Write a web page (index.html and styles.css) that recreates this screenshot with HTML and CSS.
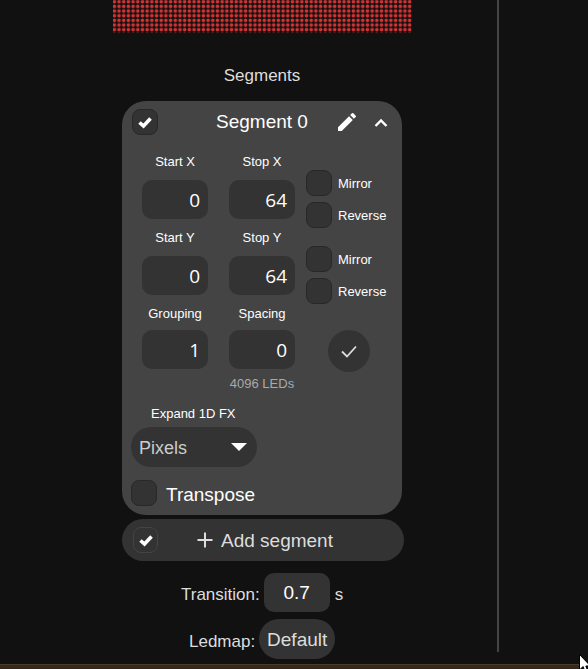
FILE: index.html
```html
<!DOCTYPE html>
<html lang="en">
<head>
<meta charset="utf-8">
<title>Segments</title>
<link rel="stylesheet" href="styles.css">
</head>
<body>
<div class="page">
  <main class="pane">
    <div class="matrix"></div>
    <h2 class="heading">Segments</h2>
    <section class="panel">
      <header class="panel-head">
        <span class="box"><svg class="tick" viewBox="0 0 16 16"><path d="M2.5 8.5 6.5 12 13.5 4.5" /></svg></span>
        <span class="panel-title">Segment 0</span>
        <svg class="pencil" viewBox="0 0 24 24"><path d="M3 17.25V21h3.75L17.81 9.94l-3.75-3.75L3 17.25zM20.71 7.04a1 1 0 0 0 0-1.41l-2.34-2.34a1 1 0 0 0-1.41 0l-1.83 1.83 3.75 3.75 1.83-1.83z"/></svg>
        <svg class="chevron" viewBox="0 0 14 10"><path d="M1.5 8 7 2.5 12.5 8"/></svg>
      </header>
      <div class="range">
        <label class="field"><span class="cap">Start X</span><span class="num">0</span></label>
        <label class="field"><span class="cap">Stop X</span><span class="num">64</span></label>
        <div class="flags">
          <div class="flag"><span class="box"></span>Mirror</div>
          <div class="flag"><span class="box"></span>Reverse</div>
        </div>
      </div>
      <div class="range">
        <label class="field"><span class="cap">Start Y</span><span class="num">0</span></label>
        <label class="field"><span class="cap">Stop Y</span><span class="num">64</span></label>
        <div class="flags">
          <div class="flag"><span class="box"></span>Mirror</div>
          <div class="flag"><span class="box"></span>Reverse</div>
        </div>
      </div>
      <div class="range range-last">
        <label class="field"><span class="cap cap-tight">Grouping</span><span class="num">1</span></label>
        <label class="field"><span class="cap cap-tight">Spacing</span><span class="num">0</span></label>
        <button class="apply"><svg viewBox="0 0 20 20"><path d="M3 10.5 8 15.5 17 5.5"/></svg></button>
      </div>
      <p class="count">4096 LEDs</p>
      <p class="expand">Expand 1D FX</p>
      <div class="select"><span class="select-text">Pixels</span><i class="caret"></i></div>
      <div class="transpose"><span class="box"></span><span class="transpose-text">Transpose</span></div>
    </section>
    <div class="add">
      <span class="box box-add"><svg class="tick" viewBox="0 0 16 16"><path d="M2.5 8.5 6.5 12 13.5 4.5" /></svg></span>
      <span class="add-label"><svg class="plus" viewBox="0 0 16 16"><path d="M8 0.5V15.5M0.5 8H15.5"/></svg><span class="add-text">Add segment</span></span>
    </div>
    <div class="line-row transition">
      <span class="row-text">Transition:</span><span class="num num-center">0.7</span><span class="row-text unit">s</span>
    </div>
    <div class="line-row ledmap">
      <span class="row-text">Ledmap:</span><span class="pill">Default</span>
    </div>
  </main>
  <div class="footer"></div>
  <svg class="cursor" viewBox="0 0 12 20"><path d="M0.5 0.5V16L4 12.5 6.5 18.5 9 17.5 6.8 12H11.5z"/></svg>
</div>
</body>
</html>
```
FILE: styles.css
```css
* { box-sizing: border-box; }
html, body { margin: 0; padding: 0; background: #111; }
body {
  font-family: "Liberation Sans", Arial, sans-serif;
  color: #fff;
  overflow: hidden;
}
.page {
  position: relative;
  width: 588px;
  height: 669px;
  overflow: hidden;
  display: flex;
  flex-direction: column;
}
.pane {
  width: 499px;
  height: 652px;
  border-right: 2px solid #444;
  padding-left: 122px;
  flex: none;
}
.matrix {
  width: 299px;
  height: 33px;
  margin-left: -9px;
  background-image: radial-gradient(circle at center, #d83434 0, #d03232 1.35px, #111 2.2px);
  background-size: 4.69px 4.67px;
  background-position: -1px -0.6px;
}
.heading {
  margin: 33px 0 0;
  width: 280px;
  height: 19px;
  font-size: 17px;
  font-weight: 400;
  line-height: 19px;
  text-align: center;
  color: #ddd;
}
.panel {
  width: 280px;
  height: 414px;
  margin-top: 16px;
  padding-top: 8px;
  background: #444;
  border-radius: 24px;
}
.panel-head {
  display: flex;
  align-items: center;
  height: 26px;
  padding-left: 10px;
}
.box {
  flex: none;
  display: flex;
  align-items: center;
  justify-content: center;
  width: 26px;
  height: 26px;
  border-radius: 8px;
  background: #333;
  border: 1px solid #282828;
}
.tick { width: 16px; height: 16px; fill: none; stroke: #fff; stroke-width: 3.6; }
.panel-title {
  width: 92px;
  margin-left: 58px;
  font-size: 19px;
  line-height: 26px;
  white-space: nowrap;
  color: #fff;
}
.pencil { width: 24px; height: 24px; margin-left: 27px; fill: #fff; }
.chevron { width: 14px; height: 10px; margin: 2px 0 0 15px; fill: none; stroke: #fff; stroke-width: 2.4; }
.range {
  display: flex;
  height: 76px;
  padding-left: 20px;
  gap: 21px;
}
.panel-head + .range { margin-top: 17px; }
.range-last { height: 68px; }
.field { display: flex; flex-direction: column; align-items: center; width: 66px; }
.cap {
  height: 18px;
  margin-bottom: 10px;
  font-size: 13px;
  line-height: 20px;
  white-space: nowrap;
  color: #fff;
}
.cap-tight { margin-bottom: 8px; }
.num {
  display: block;
  width: 66px;
  height: 39px;
  padding-right: 8px;
  border-radius: 10px;
  background: #333;
  font-family: "Open Sans", sans-serif;
  font-size: 19px;
  font-weight: 500;
  line-height: 41px;
  text-align: right;
  color: #fff;
}
.num-center {
  padding: 0;
  text-align: center;
  font-family: "Liberation Sans", Arial, sans-serif;
  font-size: 19px;
  font-weight: 400;
  line-height: 40px;
}
.flags {
  display: flex;
  flex-direction: column;
  gap: 6px;
  margin: 18px 0 0 -10px;
}
.flag {
  display: flex;
  align-items: center;
  gap: 6px;
  font-size: 13px;
  color: #fff;
}
.apply {
  width: 42px;
  height: 42px;
  margin: 26px 0 0 12px;
  padding: 0;
  border: 0;
  border-radius: 50%;
  background: #333;
  display: flex;
  align-items: center;
  justify-content: center;
}
.apply svg { width: 20px; height: 20px; fill: none; stroke: #ddd; stroke-width: 1.8; }
.count {
  margin: 4px 0 0;
  height: 16px;
  font-size: 13px;
  line-height: 16px;
  text-align: center;
  color: #aaa;
}
.expand {
  margin: 14px 0 0 29px;
  height: 16px;
  font-size: 13px;
  line-height: 16px;
  color: #fff;
}
.select {
  display: flex;
  align-items: center;
  justify-content: space-between;
  width: 126px;
  height: 40px;
  margin: 5px 0 0 9px;
  padding: 0 10px 0 8px;
  border-radius: 20px;
  background: #333;
  font-size: 18px;
  color: #ccc;
}
.select-text { padding-top: 2px; }
.caret {
  width: 0;
  height: 0;
  border-left: 8px solid transparent;
  border-right: 8px solid transparent;
  border-top: 8px solid #fff;
}
.transpose {
  display: flex;
  align-items: center;
  gap: 9px;
  margin: 13px 0 0 9px;
  font-size: 19px;
  color: #fff;
}
.transpose-text { padding-top: 3px; }
.add {
  display: flex;
  align-items: center;
  width: 282px;
  height: 42px;
  margin-top: 4px;
  padding-left: 11px;
  border-radius: 21px;
  background: #333;
}
.box-add { background: #333; border-color: #444; width: 25px; }
.add-label {
  display: flex;
  align-items: center;
  gap: 8px;
  margin-left: 39px;
  font-size: 19px;
  color: #ddd;
}
.add-text { padding-top: 2px; }
.plus { width: 16px; height: 16px; fill: none; stroke: #ddd; stroke-width: 2; }
.line-row {
  display: flex;
  align-items: center;
  font-size: 17px;
  color: #ddd;
}
.row-text { padding-top: 5px; }
.transition { margin: 12px 0 0 59px; gap: 4px; }
.unit { margin-left: 1px; }
.ledmap { margin: 7px 0 0 67px; gap: 4px; }
.pill {
  display: block;
  width: 76px;
  height: 40px;
  border-radius: 20px;
  background: #333;
  font-size: 19px;
  line-height: 42px;
  text-align: center;
  color: #ddd;
}
.footer {
  flex: none;
  width: 580px;
  height: 5px;
  margin-top: 12px;
  background: #33291c;
  border-top: 1px solid #4a3c28;
}
.cursor {
  position: absolute;
  left: 579px;
  top: 654px;
  width: 12px;
  height: 20px;
  fill: #fff;
  stroke: #000;
  stroke-width: 1;
}
```
